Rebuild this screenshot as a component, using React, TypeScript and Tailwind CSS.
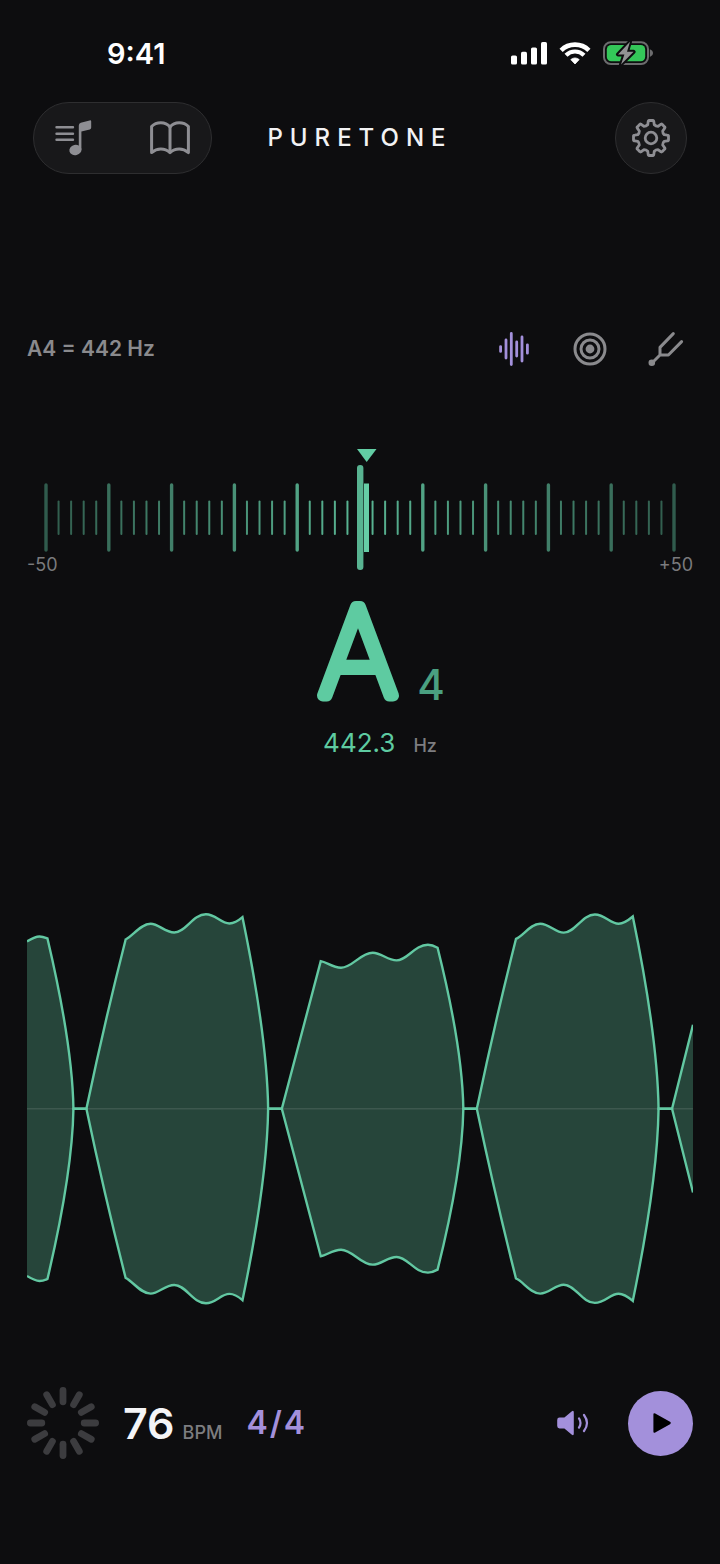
const TICKS = Array.from({ length: 51 }, (_, i) => i)
const SPOKES = Array.from({ length: 12 }, (_, i) => i * 30)

const ENVELOPE =
  'M0 -167.5 C4 -170 8 -172.5 12.5 -172.5 C16 -172.5 18 -171.5 20.5 -170.5 Q45.5 -64 46.5 0 H59.5 ' +
  'Q78 -88 98.8 -169.5 C106 -173 114 -185.2 123.8 -185.2 C132 -185.2 138 -176.5 147.5 -176.5 C159 -176.5 166 -194.8 179.2 -194.8 C189 -194.8 194 -185.5 202.8 -185.5 C208 -185.5 212 -188.5 215.8 -191.8 Q240.5 -72 241.5 0 H255.2 ' +
  'Q274 -72 294.2 -147.8 C300 -147 306 -141.2 314.5 -141.2 C326 -141.2 334 -156.2 346.2 -156.2 C355 -156.2 361 -148.5 370.2 -148.5 C381 -148.5 388 -164.2 401.5 -164.2 C405 -164.2 408 -163 411.2 -161.2 Q436 -62 437 0 H450.5 ' +
  'Q469 -88 489.7 -170 C497 -173 504 -185.2 514 -185.2 C523 -185.2 529 -176.3 537.5 -176.3 C549 -176.3 556 -194.5 568.7 -194.5 C579 -194.5 584 -185.3 592.5 -185.3 C598 -185.3 602 -188.5 606.7 -192.5 Q631.5 -72 632.5 0 H646 L667 -84'

// eight teeth around a 38px box
const gearPath = () => {
  const at = (r: number, deg: number) => {
    const a = (deg * Math.PI) / 180
    return `${(19 + r * Math.sin(a)).toFixed(2)} ${(19 - r * Math.cos(a)).toFixed(2)}`
  }
  let d = ''
  for (let i = 0; i < 8; i++) {
    const c = i * 45
    d += `${i ? 'L' : 'M'}${at(13.6, c - 14)} L${at(16.4, c - 10)} Q${at(17.8, c - 9)} ${at(17.6, c - 6)} `
    d += `L${at(17.6, c + 6)} Q${at(17.8, c + 9)} ${at(16.4, c + 10)} L${at(13.6, c + 14)} Q${at(12.6, c + 22.5)} ${at(13.6, c + 31)} `
  }
  return d + 'Z'
}

const StatusBar = () => (
  <div className="flex h-9 items-center justify-between pl-20 pr-10 text-white">
    <span className="text-[29px] font-semibold leading-8">9:41</span>
    <div className="flex items-center gap-3 pb-0.5">
      <svg width="36" height="24" viewBox="0 0 36 24" fill="currentColor">
        <rect x="0" y="14.5" width="6" height="9" rx="1.6" />
        <rect x="10" y="10.8" width="6" height="12.7" rx="1.6" />
        <rect x="20" y="6.5" width="6" height="17" rx="1.6" />
        <rect x="30" y="1" width="6" height="22.5" rx="1.6" />
      </svg>
      <svg width="32" height="24" viewBox="0 0 32 24" fill="none" stroke="currentColor">
        <path d="M2.1 9.3 A19.8 19.8 0 0 1 29.9 9.3" strokeWidth="4.6" />
        <path d="M7 14.2 A12.8 12.8 0 0 1 25 14.2" strokeWidth="4.2" />
        <path d="M11.8 18.6 A6.2 6.2 0 0 1 20.2 18.6 L16 23 Z" fill="currentColor" strokeWidth="0.8" strokeLinejoin="round" />
      </svg>
      <svg width="50" height="24" viewBox="0 0 50 24">
        <rect x="1" y="1.2" width="44" height="21.8" rx="6.8" fill="none" stroke="#6c6c6e" strokeWidth="2" />
        <rect x="3.8" y="4" width="38.4" height="16.2" rx="4.4" fill="#34c759" />
        <path d="M46.8 8.3 Q50 9.6 50 12.1 Q50 14.6 46.8 15.9 Z" fill="#6c6c6e" />
        <path
          d="M27 0.8 L15 13.4 H21.4 L18 23.4 L30.6 10.8 H24 Z"
          fill="#929294"
          stroke="#0d0d0f"
          strokeWidth="4"
          strokeLinejoin="round"
          paintOrder="stroke"
        />
      </svg>
    </div>
  </div>
)

const Header = () => (
  <header className="mt-[30px] grid grid-cols-[1fr_auto_1fr] items-center px-1.5">
    <div className="flex h-18 w-[179px] items-center justify-between rounded-full border border-[#2e2e30] bg-[#18181a] px-[21px] text-[#8e8e93]">
      <button type="button" aria-label="Playlist">
        <svg width="38" height="38" viewBox="0 0 38 38" fill="currentColor">
          <path d="M1.5 8.3 H18 M1.5 14.7 H18 M1.5 20.8 H18" stroke="currentColor" strokeWidth="2.4" strokeLinecap="round" />
          <ellipse cx="20.4" cy="31" rx="6.1" ry="5.2" transform="rotate(-14 20.4 31)" />
          <path d="M23.8 31 V6.6 Q23.8 4.4 25.8 3.8 L34.6 1.4 Q36.2 1 36.2 2.6 V8.6 Q36.2 10 34.8 10.4 L26.4 12.6 V31 Z" />
        </svg>
      </button>
      <button type="button" aria-label="Library">
        <svg width="40" height="34" viewBox="0 0 40 34" fill="none" stroke="currentColor" strokeWidth="3" strokeLinejoin="round">
          <path d="M20 6 C17.6 3 14.4 1.8 10.8 1.8 C7.2 1.8 4 3 1.6 5.6 V31.6 C4.4 29.2 7.4 28 10.8 28 C14.4 28 17.4 29.2 20 31.6 C22.6 29.2 25.6 28 29.2 28 C32.6 28 35.6 29.2 38.4 31.6 V5.6 C36 3 32.8 1.8 29.2 1.8 C25.6 1.8 22.4 3 20 6 Z" />
          <path d="M20 6 V31.6" />
        </svg>
      </button>
    </div>
    <h1 className="text-2xl font-medium tracking-[7px] text-[#f2f2f4]">PURETONE</h1>
    <button
      type="button"
      aria-label="Settings"
      className="flex size-18 items-center justify-center justify-self-end rounded-full border border-[#2e2e30] bg-[#18181a] text-[#8e8e93]"
    >
      <svg width="38" height="38" viewBox="0 0 38 38" fill="none" stroke="currentColor" strokeWidth="2.8" strokeLinejoin="round">
        <path d={gearPath()} />
        <circle cx="19" cy="19" r="5.8" />
      </svg>
    </button>
  </header>
)

const ModeBar = () => (
  <div className="mt-[151px] flex h-12 items-center justify-between text-[#8a8a8d]">
    <span className="text-[21px] font-semibold">A4 = 442 Hz</span>
    <div className="flex gap-[22px]">
      <button type="button" aria-label="Waveform" className="flex w-[54px] justify-center text-[#a390db]">
        <svg width="32" height="36" viewBox="0 0 32 36" stroke="currentColor" strokeWidth="2.8" strokeLinecap="round">
          <path d="M2.6 15.6 V20.4 M8 9 V27 M13.3 2.4 V33.6 M18.7 11 V25 M24 6 V30 M29.4 13.8 V22.2" />
        </svg>
      </button>
      <button type="button" aria-label="Strobe" className="flex w-[54px] justify-center">
        <svg width="36" height="36" viewBox="0 0 36 36" fill="none" stroke="currentColor" strokeWidth="3">
          <circle cx="18" cy="18" r="15" />
          <circle cx="18" cy="18" r="9" />
          <circle cx="18" cy="18" r="4.4" fill="currentColor" stroke="none" />
        </svg>
      </button>
      <button type="button" aria-label="Tuning fork" className="flex w-[54px] justify-center">
        <svg width="36" height="36" viewBox="0 0 36 36" fill="none" stroke="currentColor" strokeWidth="3" strokeLinecap="round" strokeLinejoin="round">
          <path d="M25.3 2.6 L12 16.4 V24 L4 32 M12 24 H20.4 L33.6 10.6" />
          <circle cx="3.8" cy="31.8" r="3.3" fill="currentColor" stroke="none" />
        </svg>
      </button>
    </div>
  </div>
)

const Meter = () => (
  <div className="mt-[76px]">
    <svg viewBox="0 0 666 122" className="h-auto w-full" strokeLinecap="round">
      {TICKS.map((i) => {
        const major = i % 5 === 0
        const x = 19 + i * 12.56
        return (
          <line
            key={i}
            x1={x}
            x2={x}
            y1={major ? 36 : 52.5}
            y2={major ? 101 : 85}
            stroke="#62c8a2"
            strokeWidth={major ? 3.4 : 2}
            opacity={0.9 - (Math.abs(i - 25) / 25) * 0.48}
          />
        )
      })}
      <rect x="337" y="34.5" width="5" height="68.5" fill="#66cda6" />
      <rect x="330" y="16" width="6.4" height="105" rx="3" fill="#58b391" />
      <path d="M330 0 H349.5 L339.7 13 Z" fill="#62cda4" />
    </svg>
    <div className="-mt-[18px] flex justify-between text-lg leading-6 text-[#7a7a7d]">
      <span>-50</span>
      <span>+50</span>
    </div>
  </div>
)

const NoteReadout = () => (
  <div className="mt-6 flex flex-col items-center pl-10 text-[#5ecba1]">
    <div className="flex items-end gap-[18px]">
      <svg width="84" height="100" viewBox="0 0 84 100" className="overflow-visible">
        <text
          x="43"
          y="94"
          textAnchor="middle"
          className="font-['Roboto',sans-serif]"
          fontSize="124"
          fontWeight="100"
          fill="currentColor"
          stroke="currentColor"
          strokeWidth="12"
          strokeLinejoin="round"
        >
          A
        </text>
      </svg>
      <span className="text-[42px] font-medium leading-8 text-[#4aa081]">4</span>
    </div>
    <p className="mt-[26px] flex items-baseline gap-[18px] leading-8">
      <span className="text-[26px]">442.3</span>
      <span className="text-lg font-medium text-[#7d7d80]">Hz</span>
    </p>
  </div>
)

const Wave = () => (
  <svg viewBox="0 -198 667 396" className="mt-[151px] h-auto w-full" fill="none" stroke="#62c8a2" strokeWidth="2.4">
    <g fill="#26453a" stroke="none">
      <path d={`${ENVELOPE} V0 H0 Z`} />
      <path d={`${ENVELOPE} V0 H0 Z`} transform="scale(1 -1)" />
    </g>
    <path d="M0 0 H667" stroke="#3d584e" strokeWidth="1.4" />
    <path d={ENVELOPE} />
    <path d={ENVELOPE} transform="scale(1 -1)" />
  </svg>
)

const Metronome = () => (
  <footer className="mt-[81px] flex items-center">
    <svg width="72" height="72" viewBox="-36 -36 72 72" stroke="#3c3c3f" strokeWidth="6.8" strokeLinecap="round">
      {SPOKES.map((deg) => (
        <path key={deg} d="M0 -21.2 V-32.6" transform={`rotate(${deg})`} />
      ))}
    </svg>
    <button type="button" className="ml-6 flex items-baseline gap-2">
      <span className="text-[43px] font-semibold leading-12 text-[#f4f4f6]">76</span>
      <span className="text-lg font-medium text-[#7d7d80]">BPM</span>
    </button>
    <button type="button" className="ml-6 text-[32px] font-semibold leading-10 tracking-[2px] text-[#a390db]">
      4/4
    </button>
    <button type="button" aria-label="Volume" className="ml-auto text-[#a390db]">
      <svg width="32" height="26" viewBox="0 0 32 26" fill="none" stroke="currentColor" strokeWidth="2.2" strokeLinecap="round">
        <path
          d="M2.6 7.6 H7.4 L14.6 1.4 Q16.8 -0.2 16.8 2.4 V23.6 Q16.8 26.2 14.6 24.6 L7.4 18.4 H2.6 Q0.2 18.4 0.2 16 V10 Q0.2 7.6 2.6 7.6 Z"
          fill="currentColor"
          stroke="none"
        />
        <path d="M22 8.4 Q25 13 22 17.6 M27 5 Q33 13 27 21" />
      </svg>
    </button>
    <button type="button" aria-label="Play" className="ml-[39px] flex size-[65px] items-center justify-center rounded-full bg-[#a390db] pl-0.5 text-black">
      <svg width="18" height="20" viewBox="0 0 18 20" fill="currentColor">
        <path d="M0.4 1.6 Q0.4 -0.4 2.2 0.6 L17 8.8 Q18.6 10 17 11.2 L2.2 19.4 Q0.4 20.4 0.4 18.4 Z" />
      </svg>
    </button>
  </footer>
)

export default function App() {
  return (
    <main className="min-h-screen bg-[#0d0d0f] px-[27px] pb-12 pt-9 font-['Inter',sans-serif]">
      <StatusBar />
      <Header />
      <ModeBar />
      <Meter />
      <NoteReadout />
      <Wave />
      <Metronome />
    </main>
  )
}
